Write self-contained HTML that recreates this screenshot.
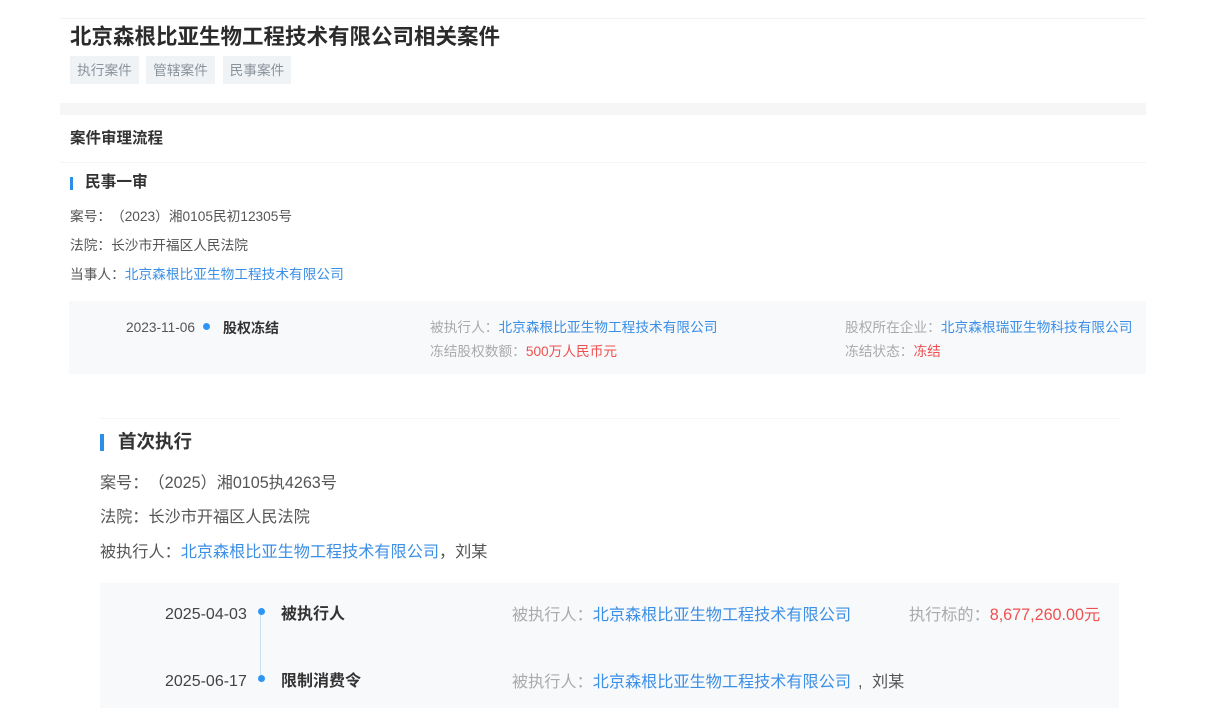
<!DOCTYPE html>
<html lang="zh">
<head>
<meta charset="utf-8">
<style>
html,body{margin:0;padding:0;background:#fff}
body{width:1206px;height:721px;position:relative;overflow:hidden;font-family:"Liberation Sans","Noto Sans CJK SC",sans-serif;color:#555}
#p{position:absolute;left:0;top:0;width:1206px;height:721px;filter:blur(.35px)}
.t{position:absolute;white-space:nowrap;line-height:20px;height:20px}
.b{position:absolute}
.l{color:#3b8fe6}.r{color:#ee5050}.g{color:#aaa}
.s{font-size:13.7px}.m{font-size:16.15px}
.w{font-weight:700;color:#333}
.i{display:inline-block}
.tag{position:absolute;top:56px;height:28px;line-height:30px;background:#f0f3f6;color:#8a939c;font-size:13.7px;text-align:center;white-space:nowrap}
.dot{position:absolute;border-radius:50%;background:#2f95f3}
</style>
</head>
<body>
<div id="p">
<div class="b" style="left:60px;top:18px;width:1086px;height:1px;background:#f3f3f3"></div>
<div class="t" style="left:70px;top:27px;font-size:21.5px;font-weight:700;color:#2b2b2b">北京森根比亚生物工程技术有限公司相关案件</div>
<div class="tag" style="left:70px;width:69px">执行案件</div>
<div class="tag" style="left:146px;width:69px">管辖案件</div>
<div class="tag" style="left:223px;width:68px">民事案件</div>
<div class="b" style="left:60px;top:103px;width:1086px;height:12px;background:#f6f6f6"></div>
<div class="t w" style="left:70px;top:129px;font-size:15.5px">案件审理流程</div>
<div class="b" style="left:60px;top:162px;width:1086px;height:1px;background:#f5f5f5"></div>
<div class="b" style="left:70px;top:177px;width:3px;height:13px;background:#2b8fe8"></div>
<div class="t w" style="left:85px;top:173px;font-size:15.7px">民事一审</div>
<div class="t s" style="left:70px;top:207px"><span class="i" style="width:41px">案号&#65306;</span><span class="i">（2023）湘0105民初12305号</span></div>
<div class="t s" style="left:70px;top:236px">法院&#65306;长沙市开福区人民法院</div>
<div class="t s" style="left:70px;top:265px">当事人&#65306;<span class="l">北京森根比亚生物工程技术有限公司</span></div>

<div class="b" style="left:69px;top:301px;width:1077px;height:73px;background:#f8f9fb"></div>
<div class="t s" style="left:126px;top:318px;color:#555">2023-11-06</div>
<div class="dot" style="left:203px;top:323px;width:7px;height:7px"></div>
<div class="t w" style="left:223px;top:318px;font-size:14px">股权冻结</div>
<div class="t s g" style="left:430px;top:318px">被执行人&#65306;<span class="l">北京森根比亚生物工程技术有限公司</span></div>
<div class="t s g" style="left:430px;top:342px">冻结股权数额&#65306;<span class="r">500万人民币元</span></div>
<div class="t s g" style="left:845px;top:318px">股权所在企业&#65306;<span class="l">北京森根瑞亚生物科技有限公司</span></div>
<div class="t s g" style="left:845px;top:342px">冻结状态&#65306;<span class="r">冻结</span></div>

<div class="b" style="left:100px;top:418px;width:1020px;height:1px;background:#f6f6f6"></div>
<div class="b" style="left:100px;top:434px;width:4px;height:17px;background:#2b8fe8"></div>
<div class="t w" style="left:118px;top:432px;font-size:18.5px">首次执行</div>
<div class="t m" style="left:100px;top:473px"><span class="i" style="width:48.5px">案号&#65306;</span><span class="i">（2025）湘0105执4263号</span></div>
<div class="t m" style="left:100px;top:507px">法院&#65306;长沙市开福区人民法院</div>
<div class="t m" style="left:100px;top:542px">被执行人&#65306;<span class="l">北京森根比亚生物工程技术有限公司</span>&#65292;刘某</div>

<div class="b" style="left:100px;top:583px;width:1019px;height:125px;background:#f8f9fb"></div>
<div class="b" style="left:260px;top:612px;width:1px;height:68px;background:#c5dff5"></div>
<div class="dot" style="left:258px;top:608px;width:7px;height:7px"></div>
<div class="dot" style="left:258px;top:675px;width:7px;height:7px"></div>
<div class="t" style="left:165px;top:605px;font-size:16px;color:#444">2025-04-03</div>
<div class="t" style="left:165px;top:672px;font-size:16px;color:#444">2025-06-17</div>
<div class="t w" style="left:281px;top:605px;font-size:16px">被执行人</div>
<div class="t w" style="left:281px;top:672px;font-size:16px">限制消费令</div>
<div class="t m g" style="left:512px;top:605px">被执行人&#65306;<span class="l">北京森根比亚生物工程技术有限公司</span></div>
<div class="t m g" style="left:512px;top:672px">被执行人&#65306;<span class="l">北京森根比亚生物工程技术有限公司</span></div>
<div class="t m" style="left:858px;top:672px;color:#555">,</div>
<div class="t m" style="left:872px;top:672px;color:#555">刘某</div>
<div class="t m g" style="left:909px;top:605px">执行标的&#65306;<span class="r">8,677,260.00元</span></div>
</div>
</body>
</html>
